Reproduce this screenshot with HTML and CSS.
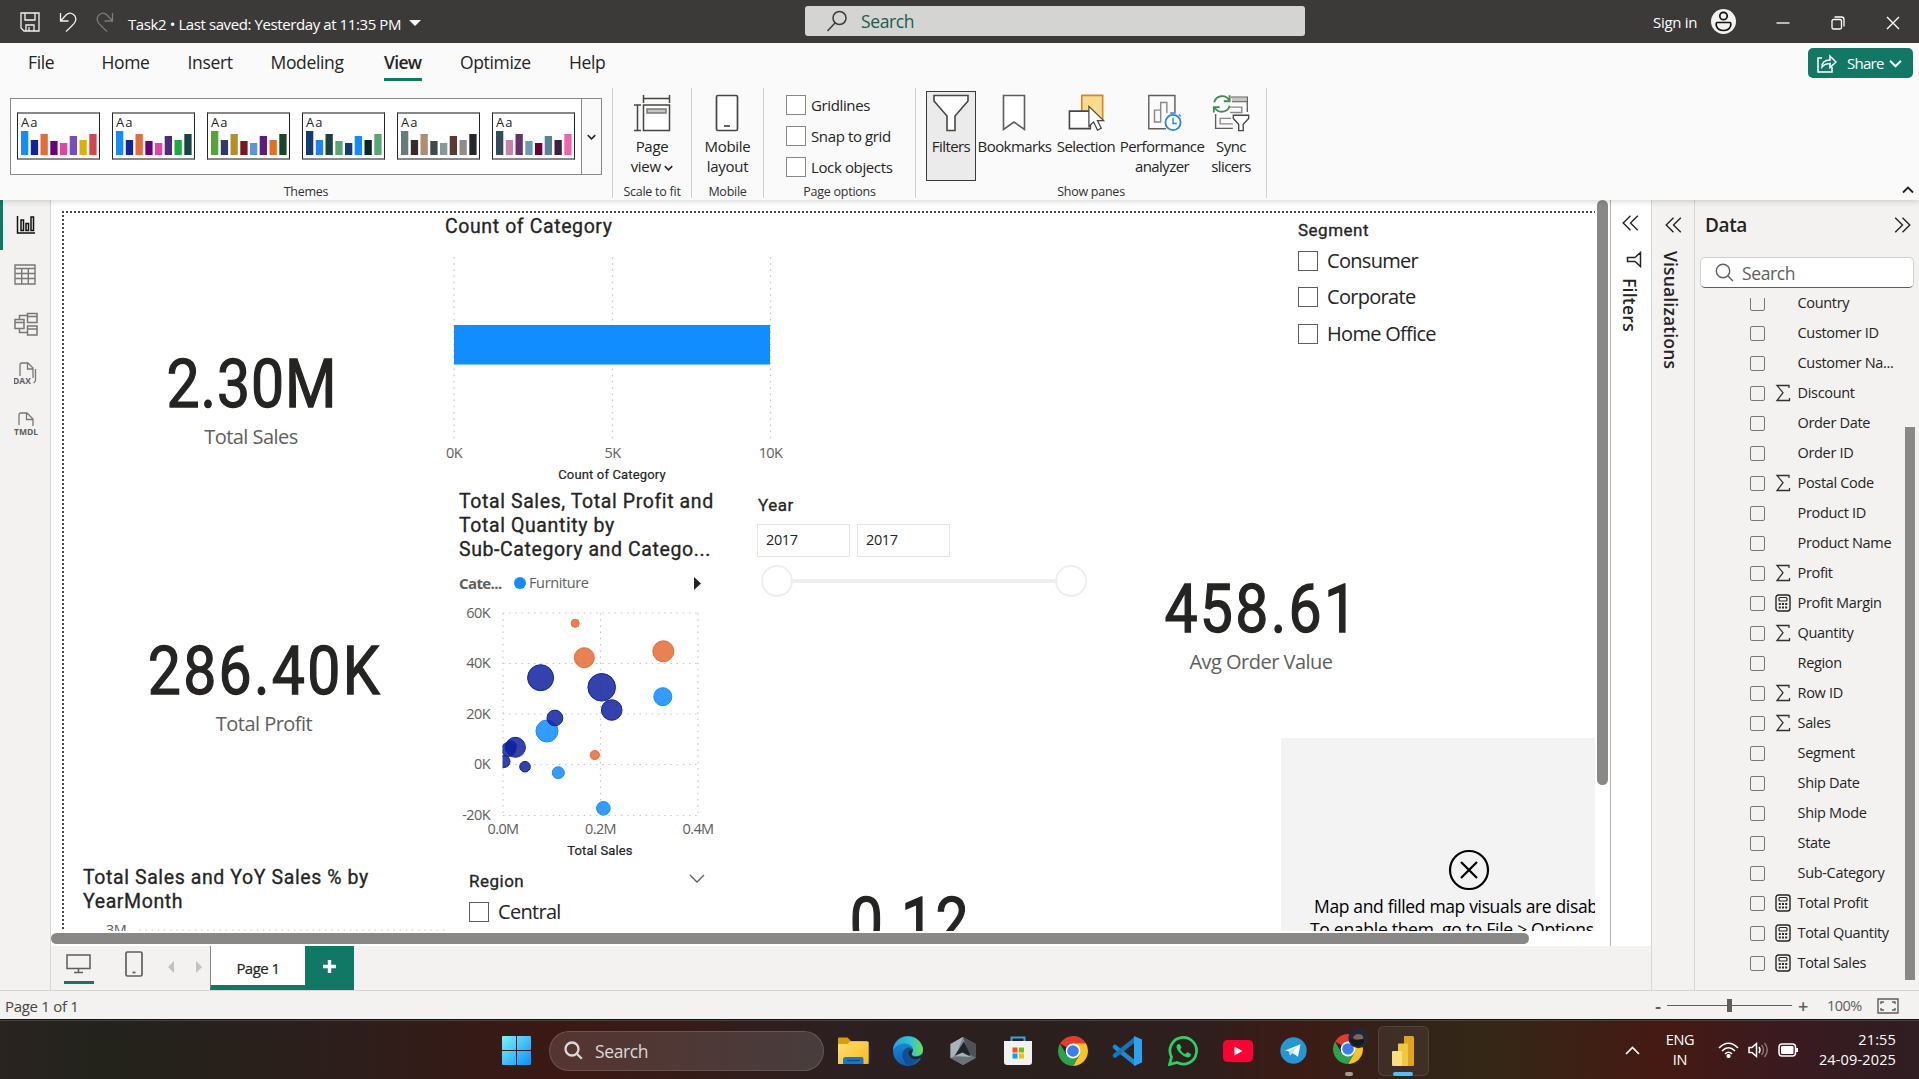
FILE: index.html
```html
<!DOCTYPE html>
<html lang="en">
<head>
<meta charset="utf-8">
<title>Task2 - Power BI Desktop</title>
<link rel="stylesheet" href="styles.css">
</head>
<body>
<svg class="defs" width="0" height="0">
  <defs>
    <symbol id="sigma" viewBox="0 0 16 18"><path d="M14 4V1.500H2l6 7.200L2 16.500h12.500V14" fill="none" stroke="#323130" stroke-width="1.300"/></symbol>
    <symbol id="calc" viewBox="0 0 16 18"><rect x="1" y="1" width="14" height="16" rx="2.500" fill="none" stroke="#252423" stroke-width="1.400"/><rect x="4" y="3.500" width="8" height="3.500" rx="1" fill="none" stroke="#252423" stroke-width="1.200"/><path d="M3.800 10h2m1.200 0h2m1.200 0h2M3.800 13.500h2m1.200 0h2m1.200 0h2" stroke="#252423" stroke-width="2"/></symbol>
    <symbol id="dbl-left" viewBox="0 0 17 16"><path d="M8.500 .7 1.200 8l7.300 7.300M15.800 .7 8.500 8l7.300 7.300" fill="none" stroke="#252423" stroke-width="1.400"/></symbol>
    <symbol id="chev" viewBox="0 0 12 8"><path d="M1 1.500 6 6.500l5-5" fill="none" stroke="currentColor" stroke-width="1.900"/></symbol>
    <symbol id="bars" viewBox="0 0 76 24" preserveAspectRatio="none">
      <rect x="0" y="0" width="7.300" height="24" fill="var(--a)"/><rect x="9.800" y="9" width="7.300" height="15" fill="var(--b)"/><rect x="19.500" y="3" width="7.300" height="21" fill="var(--c)"/><rect x="29.300" y="10" width="7.300" height="14" fill="var(--d)"/><rect x="39" y="12" width="7.300" height="12" fill="var(--e)"/><rect x="48.700" y="5" width="7.300" height="19" fill="var(--f)"/><rect x="58.500" y="9" width="7.300" height="15" fill="var(--g)"/><rect x="68.300" y="3" width="7.300" height="21" fill="var(--h)"/>
    </symbol>
    <symbol id="chrome" viewBox="0 0 30 30">
      <path d="M15 15 2.010 7.500A15 15 0 0 1 27.990 7.500z" fill="#e33b2e"/>
      <path d="M15 0A15 15 0 0 1 27.990 7.500H15z" fill="#e33b2e"/>
      <path d="M27.990 7.500A15 15 0 0 1 15 30l6.500-11.300L15 7.500z" fill="#fcc31e"/>
      <path d="M2.010 7.500A15 15 0 0 0 15 30l6.500-11.300L8.500 18.800z" fill="#2da14c"/>
      <circle cx="15" cy="15" r="7.400" fill="#fff"/><circle cx="15" cy="15" r="5.800" fill="#3b7ded"/>
    </symbol>
  </defs>
</svg>

<header class="titlebar">
  <div class="quick">
    <svg width="20" height="20" viewBox="0 0 20 20" fill="none" stroke="#f3f2f1" stroke-width="1.300"><path d="M1 1h18v18H4l-3-3zM5 1v7h10V1M6 19v-6h8v6M9 15v4"/></svg>
    <svg width="18" height="20" viewBox="0 0 18 20" fill="none" stroke="#f3f2f1" stroke-width="1.300"><path d="M1.500 1v8h8M1.500 9 7 3c5-4.500 12 1 9 7-1 2-3 4-9 9.500"/></svg>
    <svg width="18" height="20" viewBox="0 0 18 20" fill="none" stroke="#7d7b79" stroke-width="1.300"><path d="M16.500 1v8h-8M16.500 9 11 3C6-1.500-1 4 2 10c1 2 3 4 9 9.500"/></svg>
  </div>
  <div class="doc">Task2 • Last saved: Yesterday at 11:35 PM</div>
  <svg class="doc-caret" width="12" height="6" viewBox="0 0 12 6"><path d="M0 0h12L6 6z" fill="#fff"/></svg>
  <div class="top-search">
    <svg width="22" height="22" viewBox="0 0 22 22" fill="none" stroke="#3b3a39" stroke-width="1.500"><circle cx="13.500" cy="8" r="6.500"/><path d="m9 13-7.500 8"/></svg>
    <span>Search</span>
  </div>
  <div class="account">Sign in
    <svg width="25" height="25" viewBox="0 0 25 25"><circle cx="12.500" cy="12.500" r="12.500" fill="#f3f2f1"/><g fill="none" stroke="#111" stroke-width="1.700"><circle cx="12.500" cy="7" r="3.700"/><path d="M6 13.500h13c1.600 0 1.600 8-6.500 8s-8.100-8-6.500-8z"/></g></svg>
  </div>
  <div class="winbtns">
    <svg width="14" height="16" viewBox="0 0 14 16"><path d="M.5 8h13" stroke="#fff" stroke-width="1.300"/></svg>
    <svg width="14" height="14" viewBox="0 0 14 14" fill="none" stroke="#fff" stroke-width="1.300"><rect x="1" y="3.500" width="9.500" height="9.500" rx="1.500"/><path d="M3.500 1h7q2.500 0 2.500 2.500v7"/></svg>
    <svg width="14" height="14" viewBox="0 0 14 14"><path d="m1 1 12 12M13 1 1 13" stroke="#fff" stroke-width="1.400"/></svg>
  </div>
</header>

<section class="ribbon">
  <nav class="tabs">
    <span class="t-file">File</span><span class="t-home">Home</span><span class="t-insert">Insert</span><span class="t-model">Modeling</span><span class="t-view on">View</span><span class="t-opt">Optimize</span><span class="t-help">Help</span>
    <button class="share">
      <svg width="20" height="19" viewBox="0 0 20 19" fill="none" stroke="#fff" stroke-width="1.500"><path d="M5 4H1v14h14v-5M5 13c0-5 3-7 8-7V2l6 6-6 5.500V9.500c-4 0-6 1-8 3.500z"/></svg>
      Share
      <svg class="sm" width="13" height="9"><use href="#chev"/></svg>
    </button>
  </nav>
  <div class="groups">
    <div class="group g-themes">
      <div class="gallery">
        <div class="thumbs">
          <div class="thumb p1"><b>Aa</b><svg width="76" height="24"><use href="#bars"/></svg></div>
          <div class="thumb p2"><b>Aa</b><svg width="76" height="24"><use href="#bars"/></svg></div>
          <div class="thumb p3"><b>Aa</b><svg width="76" height="24"><use href="#bars"/></svg></div>
          <div class="thumb p4"><b>Aa</b><svg width="76" height="24"><use href="#bars"/></svg></div>
          <div class="thumb p5"><b>Aa</b><svg width="76" height="24"><use href="#bars"/></svg></div>
          <div class="thumb p6"><b>Aa</b><svg width="76" height="24"><use href="#bars"/></svg></div>
        </div>
        <div class="more"><svg width="9" height="6"><use href="#chev"/></svg></div>
      </div>
      <div class="cap">Themes</div>
    </div>
    <div class="group g-scale">
      <div class="cmd"><svg width="38" height="38" viewBox="0 0 38 38" fill="none" stroke="#484644" stroke-width="1.500"><path d="M10.500 1v8M36.500 1v8M10.500 4.500h26M1 11h7M1 36.500h7M4.500 11v25.500"/><path d="M10.500 11h26v25.500h-26z" fill="#fff"/><path d="M14 15h19v4H14z" fill="#c8c6c4" stroke="#797775"/></svg>
      <span>Page<br>view <svg width="9" height="6"><use href="#chev"/></svg></span></div>
      <div class="cap">Scale to fit</div>
    </div>
    <div class="group g-mobile">
      <div class="cmd"><svg width="24" height="38" viewBox="0 0 24 38" fill="none" stroke="#484644" stroke-width="1.700"><rect x="1.500" y="1.500" width="21" height="35" rx="1.500" fill="#fff"/><path d="M9 32h6"/></svg>
      <span>Mobile<br>layout</span></div>
      <div class="cap">Mobile</div>
    </div>
    <div class="group g-opts">
      <div class="checks"><label><i></i>Gridlines</label><label><i></i>Snap to grid</label><label><i></i>Lock objects</label></div>
      <div class="cap">Page options</div>
    </div>
    <div class="group g-panes">
      <div class="cmds">
        <div class="cmd pressed"><svg width="38" height="38" viewBox="0 0 38 38"><path d="M2 1.500h34V7L23 22v14.500h-8V22L2 7z" fill="#fff" stroke="#484644" stroke-width="1.600"/></svg><span>Filters</span></div>
        <div class="cmd c-book"><svg width="24" height="38" viewBox="0 0 24 38"><path d="M1.500 1.500h21v34L12 28 1.500 35.500z" fill="#fff" stroke="#605e5c" stroke-width="1.600"/></svg><span>Bookmarks</span></div>
        <div class="cmd c-sel"><svg width="40" height="40" viewBox="0 0 40 40"><path d="M14.500 1.500h22v25h-22z" fill="#f8dc8d" stroke="#d9822b" stroke-width="1.700"/><path d="M1.500 18h22v18.500h-22z" fill="#fff" stroke="#484644" stroke-width="1.700"/><path d="M22 13v21l5-4.500 4 8.500 4-2-4-8h6.500z" fill="#fff" stroke="#484644" stroke-width="1.300"/></svg><span>Selection</span></div>
        <div class="cmd c-perf"><svg width="38" height="40" viewBox="0 0 38 40" fill="none" stroke="#605e5c" stroke-width="1.500"><path d="M21 36.500H3v-35h27.500V19"/><path d="M9 29.500V17h6.500v12.500zM15.500 29.500V9H22v11" stroke="#8a8886"/><g stroke="#2b88d0" stroke-width="1.900"><circle cx="28.500" cy="30" r="8"/><path d="M28.500 25v6h4M25.500 20h6M34.500 21.500l2 2" stroke-width="1.500"/></g></svg><span>Performance<br>analyzer</span></div>
        <div class="cmd c-sync"><svg width="42" height="42" viewBox="0 0 42 42" fill="none" stroke="#605e5c" stroke-width="1.500"><path d="M21 3.500h18V20M22 8.500h17M4 22v16h19"/><path d="M22 4h16v4H22z" fill="#c8c6c4" stroke="none"/><path d="M20 14.500h13v6H20M23 33H9v-6h12" stroke="#8a8886"/><path d="M23.500 23.500h17V27l-6 6.500v7h-5v-7l-6-6.500z" fill="#fff" stroke="#484644"/><g stroke="#3d8f4e" stroke-width="2"><path d="M2.500 9A9 9 0 0 1 19 7M19.500 1.500V8h-6.500M19.500 13A9 9 0 0 1 3 15M2 20.500V14.500h6.500"/></g></svg><span>Sync<br>slicers</span></div>
      </div>
      <div class="cap">Show panes</div>
    </div>
    <svg class="collapse" width="12" height="8"><use href="#chev"/></svg>
  </div>
</section>

<main class="work">
  <aside class="rail">
    <div class="r-on"><svg width="20" height="20" viewBox="0 0 20 20" fill="none" stroke="#111" stroke-width="1.500"><path d="M1.500 1v17H19M5 5h2.500v10.500H5zM10 8.500h2.500v7H10zM15 2h2.500v13.500H15z"/></svg></div>
    <div><svg width="22" height="21" viewBox="0 0 22 21" fill="none" stroke="#797775" stroke-width="1.400"><path d="M1 1h20v19H1zM1 4.500h20M1 9.500h20M1 14.500h20M7.700 4.500V20M14.300 4.500V20"/></svg></div>
    <div><svg width="24" height="24" viewBox="0 0 24 24" fill="none" stroke="#797775" stroke-width="1.500"><path d="M13.500 1.500h9.500v9h-9.500zM13.500 4.500H23M13.500 14h9.500v9h-9.500zM13.500 17H23M1 7.500h9v9H1zM1 10.500h9M5.500 7.500v-4h8M5.500 16.500v4h8"/></svg></div>
    <div><svg width="24" height="24" viewBox="0 0 24 24" fill="none" stroke="#797775" stroke-width="1.300"><path d="M6 14V3q0-2 2-2h6l5 5v10M13.500 1v6H19M21.500 7v11q0 2-2 3"/><text class="rail-t" x="-1" y="22">DAX</text></svg></div>
    <div><svg width="24" height="24" viewBox="0 0 24 24" fill="none" stroke="#797775" stroke-width="1.300"><path d="M5 13V3q0-2 2-2h6l6 6v7M12.500 1v6.500H19"/><text class="rail-t" x="0" y="22.500">TMDL</text></svg></div>
  </aside>

  <div class="center">
    <div class="stage">
      <div class="canvas">
        <div class="page-edge"></div>

        <div class="card k-sales"><div class="num">2.30M</div><div class="lbl">Total Sales</div></div>
        <div class="card k-profit"><div class="num">286.40K</div><div class="lbl">Total Profit</div></div>
        <div class="card k-aov"><div class="num">458.61</div><div class="lbl">Avg Order Value</div></div>
        <div class="card k-disc"><div class="num">0.12</div></div>

        <div class="visual v-count">
          <h3>Count of Category</h3>
          <svg width="360" height="240" viewBox="430 240 360 240">
            <path class="grid" d="M454 257v183M612.500 257v183M770.500 257v183"/>
            <rect x="454" y="325" width="316" height="39.500" fill="#118dff"/>
            <g class="ax" text-anchor="middle"><text x="454" y="458">0K</text><text x="612.500" y="458">5K</text><text x="770.500" y="458">10K</text></g>
            <text class="axt" text-anchor="middle" x="612" y="478.500">Count of Category</text>
          </svg>
        </div>

        <div class="visual v-scatter">
          <h3>Total Sales, Total Profit and<br>Total Quantity by<br>Sub-Category and Catego...</h3>
          <div class="legend"><b>Cate...</b><i></i><span>Furniture</span><svg width="7" height="13" viewBox="0 0 7 13"><path d="M0 0v13l7-6.500z" fill="#252423"/></svg></div>
          <svg width="290" height="264" viewBox="440 600 290 264">
            <defs><clipPath id="plot"><rect x="502.500" y="605" width="200" height="215"/></clipPath></defs>
            <path class="grid" d="M503 613h195M503 663.500h195M503 714h195M503 764.500h195M503 815.500h195M503 613v202M600.500 613v202M698 613v202"/>
            <g clip-path="url(#plot)" class="dots">
              <g class="blue"><circle cx="547" cy="731" r="11"/><circle cx="662.800" cy="696.700" r="9"/><circle cx="558.300" cy="772.700" r="6"/><circle cx="603.400" cy="808.300" r="6.800"/></g>
              <g class="navy"><circle cx="540.600" cy="677.700" r="13"/><circle cx="601.700" cy="687.300" r="13.800"/><circle cx="611.700" cy="710" r="10.300"/><circle cx="554.900" cy="718" r="7.900"/><circle cx="515.400" cy="747.300" r="10"/><circle cx="508.500" cy="749.500" r="7"/><circle cx="511" cy="746.500" r="5.500"/><circle cx="504" cy="761.500" r="6"/><circle cx="525" cy="766.700" r="5.300"/></g>
              <g class="orange"><circle cx="575.200" cy="623.300" r="4"/><circle cx="584.300" cy="657.700" r="10"/><circle cx="663.300" cy="651.300" r="10.500"/><circle cx="594.800" cy="755" r="4.600"/></g>
            </g>
            <g class="ax" text-anchor="end"><text x="490" y="618">60K</text><text x="490" y="668">40K</text><text x="490" y="719">20K</text><text x="490" y="769">0K</text><text x="490" y="820">-20K</text></g>
            <g class="ax" text-anchor="middle"><text x="503" y="834">0.0M</text><text x="600.500" y="834">0.2M</text><text x="698" y="834">0.4M</text></g>
            <text class="axt" text-anchor="middle" x="600" y="854.500">Total Sales</text>
          </svg>
        </div>

        <div class="visual v-year">
          <h4>Year</h4>
          <div class="range"><span>2017</span><span>2017</span></div>
          <div class="slider"><i></i><hr><i></i></div>
        </div>

        <div class="visual v-segment">
          <h4>Segment</h4>
          <label><i></i>Consumer</label><label><i></i>Corporate</label><label><i></i>Home Office</label>
        </div>

        <div class="visual v-map">
          <svg width="42" height="42" viewBox="0 0 42 42" fill="none" stroke="#000" stroke-width="2.200"><circle cx="21" cy="21" r="19"/><path d="m13 13 16 16M29 13 13 29"/></svg>
          <p>Map and filled map visuals are disabled.</p>
          <p class="l2">To enable them, go to File &gt; Options and settings</p>
        </div>

        <div class="visual v-yoy">
          <h3>Total Sales and YoY Sales % by<br>YearMonth</h3>
          <svg width="380" height="24" viewBox="83 913 380 24"><text class="ax" x="106" y="934">3M</text><path class="grid" d="M139 929h308"/></svg>
        </div>

        <div class="visual v-region">
          <div class="head"><h4>Region</h4><svg width="16" height="9" viewBox="0 0 16 9"><path d="m1 1 7 7 7-7" fill="none" stroke="#605e5c" stroke-width="1.300"/></svg></div>
          <label><i></i>Central</label>
        </div>
      </div>
      <div class="vtrack"><i></i></div>
      <div class="htrack"><i></i></div>
    </div>
    <aside class="filters">
      <svg width="17" height="16"><use href="#dbl-left"/></svg>
      <svg class="fun" width="16" height="17" viewBox="0 0 16 17"><path d="M14.500 1.500v14L9 10.500H1.500v-4H9z" fill="none" stroke="#252423" stroke-width="1.500"/></svg>
      <b>Filters</b>
    </aside>
    <footer class="pagetabs">
      <div class="lay on"><svg width="25" height="20" viewBox="0 0 25 20" fill="none" stroke="#605e5c" stroke-width="1.500"><path d="M1 1h23v13.500H1zM12.500 14.500V18M8 18.500h9"/></svg></div>
      <div class="lay"><svg width="18" height="26" viewBox="0 0 18 26" fill="none" stroke="#605e5c" stroke-width="1.700"><rect x="1" y="1" width="16" height="24" rx="1.500"/><path d="M7.500 21.500h3"/></svg></div>
      <svg class="ar1" width="6" height="12" viewBox="0 0 6 12"><path d="M6 0v12L0 6z" fill="#c3c1bf"/></svg>
      <svg class="ar2" width="6" height="12" viewBox="0 0 6 12"><path d="M0 0v12l6-6z" fill="#c3c1bf"/></svg>
      <div class="ptab">Page 1</div>
      <div class="plus"><svg width="15" height="15" viewBox="0 0 15 15"><path d="M7.500 1v13M1 7.500h13" stroke="#fff" stroke-width="3.400"/></svg></div>
    </footer>
  </div>

  <aside class="vis">
    <svg width="17" height="16"><use href="#dbl-left"/></svg>
    <b>Visualizations</b>
  </aside>

  <aside class="data">
    <div class="dhead"><b>Data</b><svg class="flip" width="17" height="16"><use href="#dbl-left"/></svg></div>
    <div class="dsearch"><svg width="19" height="19" viewBox="0 0 19 19" fill="none" stroke="#605e5c" stroke-width="1.400"><circle cx="8" cy="8" r="6.700"/><path d="m12.800 12.800 5.200 5.200"/></svg>Search</div>
    <div class="dlist">
      <ul>
        <li><i></i><span></span>Country</li>
        <li><i></i><span></span>Customer ID</li>
        <li><i></i><span></span>Customer Na...</li>
        <li><i></i><span><svg><use href="#sigma"/></svg></span>Discount</li>
        <li><i></i><span></span>Order Date</li>
        <li><i></i><span></span>Order ID</li>
        <li><i></i><span><svg><use href="#sigma"/></svg></span>Postal Code</li>
        <li><i></i><span></span>Product ID</li>
        <li><i></i><span></span>Product Name</li>
        <li><i></i><span><svg><use href="#sigma"/></svg></span>Profit</li>
        <li><i></i><span><svg><use href="#calc"/></svg></span>Profit Margin</li>
        <li><i></i><span><svg><use href="#sigma"/></svg></span>Quantity</li>
        <li><i></i><span></span>Region</li>
        <li><i></i><span><svg><use href="#sigma"/></svg></span>Row ID</li>
        <li><i></i><span><svg><use href="#sigma"/></svg></span>Sales</li>
        <li><i></i><span></span>Segment</li>
        <li><i></i><span></span>Ship Date</li>
        <li><i></i><span></span>Ship Mode</li>
        <li><i></i><span></span>State</li>
        <li><i></i><span></span>Sub-Category</li>
        <li><i></i><span><svg><use href="#calc"/></svg></span>Total Profit</li>
        <li><i></i><span><svg><use href="#calc"/></svg></span>Total Quantity</li>
        <li><i></i><span><svg><use href="#calc"/></svg></span>Total Sales</li>
      </ul>
      <div class="dthumb"></div>
    </div>
  </aside>
</main>

<div class="status">
  <span class="pg">Page 1 of 1</span>
  <span class="minus">-</span>
  <div class="zoom"><i></i></div>
  <span class="zplus">+</span>
  <span class="pct">100%</span>
  <svg width="22" height="16" viewBox="0 0 22 16" fill="none" stroke="#605e5c" stroke-width="1.400"><path d="M1 1h20v14H1zM4 6V4h3M15 4h3v2M18 10v2h-3M7 12H4v-2"/></svg>
</div>

<footer class="taskbar">
  <div class="apps">
    <svg class="win" width="29" height="29" viewBox="0 0 29 29"><defs><linearGradient id="wg" gradientUnits="userSpaceOnUse" x1="0" y1="0" x2="29" y2="29"><stop offset="0" stop-color="#7bf3fd"/><stop offset="1" stop-color="#0a91f5"/></linearGradient></defs><path d="M0 1q0-1 1-1h13v14H0zM15 0h13q1 0 1 1v13H15zM0 15h14v14H1q-1 0-1-1zM15 15h14v13q0 1-1 1H15z" fill="url(#wg)"/></svg>
    <div class="tsearch"><svg width="19" height="19" viewBox="0 0 19 19" fill="none" stroke="#dcd8d8" stroke-width="2.300"><circle cx="8" cy="8" r="6.500"/><path d="m12.800 12.800 5 5"/></svg>Search</div>
    <div class="app"><svg width="32" height="28" viewBox="0 0 32 28"><defs><linearGradient id="fg" x2="1" y2="1"><stop stop-color="#ffe078"/><stop offset="1" stop-color="#fbb918"/></linearGradient></defs><path d="M1 1.500Q1 .5 2 .5h8.500L14 4h16v10H1z" fill="#dc9c05"/><path d="M1 7h9.500L13 4.500h18q.7 0 .7 1V26q0 1-1 1H1z" fill="url(#fg)"/><path d="M6 27v-4.500Q6 20 8.500 20H24q2.500 0 2.500 2.500V27z" fill="#0f78d0"/><path d="M10 23.500h13" stroke="#0a4f94" stroke-width="1.200"/></svg></div>
    <div class="app"><svg width="32" height="32" viewBox="0 0 32 32"><defs><linearGradient id="e1" x2="1"><stop offset=".1" stop-color="#2ba5e2"/><stop offset=".6" stop-color="#31c7cd"/><stop offset="1" stop-color="#6fdf45"/></linearGradient><linearGradient id="e2" x2="0" y2="1"><stop stop-color="#1d93dc"/><stop offset="1" stop-color="#0c5fb4"/></linearGradient></defs><circle cx="16" cy="16" r="15" fill="url(#e2)"/><path d="M1 15C2-1 26-4 31 13c1 7-7 10-11 7-1-1 1-2 1-5C21 8 8 5 1 15z" fill="url(#e1)"/><path d="M11 17c2-5 8-6 9.500-2-.5 3-2 4-.5 5.500 2 2 6 1.500 8 1-4 8-11 9-13 8-3-3-6-8-4-12.500z" fill="#134d92"/><path d="M20.500 14c1 3-2 4.500-.7 6.500 2.500 2.500 8 1.500 11.700-2.500l-2 5.500c-2-1-3 1.500-9 0-3-2-4-5-4-7z" fill="#2b211f"/></svg></div>
    <div class="app"><svg width="28" height="30" viewBox="0 0 28 30"><path d="M14 1l12.500 7v14L14 29 1.500 22V8z" fill="#7f868c"/><path d="M14 1 1.500 8v14L7 19z" fill="#a9b3bb"/><path d="m14 1 12.500 7v14L20 18z" fill="#4c5258"/><path d="M1.500 22 14 29l12.500-7-6-3.500z" fill="#6a7177"/><path d="m15 5.500 6.500 14L5.500 20z" fill="#202428"/><path d="m5.500 20 8-3.500 8.500 4.500z" fill="#aab1b7"/></svg></div>
    <div class="app"><svg width="30" height="30" viewBox="0 0 30 30"><path d="M8.500 6V1.500h13V6" fill="none" stroke="#31a6e4" stroke-width="2"/><path d="M1 5h28v21q0 3-3 3H4q-3 0-3-3z" fill="#f1f1f1"/><path d="M9.500 11.500h5v5h-5z" fill="#f25022"/><path d="M16 11.500h5v5h-5z" fill="#7fba00"/><path d="M9.500 17.500h5v5h-5z" fill="#00a4ef"/><path d="M16 17.500h5v5h-5z" fill="#ffb900"/></svg></div>
    <div class="app"><svg width="30" height="30"><use href="#chrome"/></svg></div>
    <div class="app"><svg width="32" height="32" viewBox="0 0 32 32"><path d="m3 12 20 16" stroke="#1c8bd6" stroke-width="4.500" stroke-linecap="round"/><path d="m3 20.500 20-16" stroke="#1276bd" stroke-width="4.500" stroke-linecap="round"/><path d="m22 1 8 3.500v23L22 31z" fill="#2ba3ef"/></svg></div>
    <div class="app"><svg width="30" height="30" viewBox="0 0 30 30"><path d="M1.500 28.500 3.500 21A13.300 13.300 0 1 1 9 26.500z" fill="none" stroke="#25d366" stroke-width="2.700"/><path d="M10.500 8c-3 1-2.500 5 1.500 9s8.500 6 10.500 3c.8-1.800.5-2.300-3-3.700-1-.3-1.500 2-2.500 1.700-2-.7-4-2.700-4.700-4.500-.2-.8 1.500-1.300 1-2.500C12 8 11.700 7.700 10.500 8z" fill="#25d366"/></svg></div>
    <div class="app"><svg width="30" height="22" viewBox="0 0 30 22"><rect width="30" height="22" rx="4.500" fill="#ff0033"/><path d="m11.500 6.500 8 4.500-8 4.500z" fill="#fff"/></svg></div>
    <div class="app"><svg width="27" height="27" viewBox="0 0 27 27"><circle cx="13.500" cy="13.500" r="13.200" fill="#2197d3"/><path d="m5 13.500 15.500-6.300-2.500 12.500-5.500-3.700L10 18.500l-.7-4z" fill="#fff"/><path d="m9.300 14.500 8-5-5 6.500-2.300 2.500z" fill="#bcdcef"/></svg></div>
    <div class="app run"><svg width="36" height="38" viewBox="0 0 36 38"><use href="#chrome" x="0" y="6" width="30" height="30"/><circle cx="25.500" cy="10" r="10.200" fill="#232831"/><path d="M20 9q3-4 8-2.500 3 1.500 2 4.500l-5 .8q-5 0-5-2.800z" fill="#7d6560"/><path d="M17 11q5 2 14 0 0 7-7 7-6-1-7-7z" fill="#15191f"/></svg></div>
    <div class="app act"><svg width="26" height="30" viewBox="0 0 26 30"><path d="M14 0h8.500q1.500 0 1.500 1.500V29q0 1-1 1H14z" fill="#dfa012"/><path d="M8 8.500Q8 7.500 9 7.500h8q1 0 1 1V30H8z" fill="#efc537"/><path d="M2 16q0-1 1-1h8q1 0 1 1v14H3q-1 0-1-1z" fill="#f8df76"/></svg></div>
  </div>
  <div class="tray">
    <svg class="up" width="15" height="9" viewBox="0 0 15 9"><path d="m1 8 6.500-6.500L14 8" fill="none" stroke="#fff" stroke-width="1.700"/></svg>
    <div class="lang">ENG<br>IN</div>
    <svg class="wifi" width="21" height="16" viewBox="0 0 21 16" fill="none" stroke="#fff" stroke-width="1.600"><path d="M1 6Q10.500-3.500 20 6M4 9q6.500-6.500 13 0M7 12q3.500-3.500 7 0"/><circle cx="10.500" cy="14" r="1.300" fill="#fff"/></svg>
    <svg width="21" height="16" viewBox="0 0 21 16" fill="none" stroke="#fff" stroke-width="1.500"><path d="M1 5.500h3L8.500 1.500v13L4 10.500H1z"/><path d="M11 5q2 3 0 6"/><path d="M13.500 3q4 5 0 10M16.500 1q5.500 7 0 14" stroke="#8b7270"/></svg>
    <svg width="21" height="14" viewBox="0 0 21 14"><rect x="1" y="1" width="16.500" height="12" rx="3" fill="none" stroke="#fff" stroke-width="1.500"/><rect x="3" y="3" width="12.500" height="8" rx="1.200" fill="#fff"/><path d="M19 5v4" stroke="#fff" stroke-width="2"/></svg>
    <div class="clock">21:55<br>24-09-2025</div>
  </div>
</footer>
</body>
</html>
```

FILE: styles.css
```css
* { box-sizing: border-box; }
body {
  margin: 0; width: 1919px; height: 1079px; overflow: hidden;
  display: flex; flex-direction: column;
  font: 15px/20px "Open Sans", "Noto Sans", sans-serif; letter-spacing: -0.025em;
  color: #252423; background: #f3f2f1;
}
svg { display: block; flex: none; }
.defs { position: absolute; }
i { font-style: normal; }

/* title bar */
.titlebar { height: 43px; flex: none; display: flex; align-items: center; background: #3b3a39; color: #fff; }
.quick { display: flex; gap: 19px; padding-left: 20px; width: 128px; }
.doc { width: 281px; padding-top: 5px; white-space: nowrap; letter-spacing: -0.027em; }
.doc-caret { margin-top: 3px; }
.top-search {
  width: 500px; height: 30px; margin: 0 0 1px 384px; padding-left: 21px; border-radius: 3px;
  display: flex; align-items: center; gap: 13px; background: #d4d4d2; color: #1c5c50; font-size: 17.500px;
}
.account { display: flex; align-items: center; gap: 14px; margin-left: 348px; white-space: nowrap; letter-spacing: -0.020em; }
.winbtns { display: flex; gap: 41px; margin-left: auto; padding: 2px 19px 0 0; align-items: center; }

/* ribbon */
.ribbon { height: 157px; flex: none; background: #fafafa; box-shadow: 0 2px 5px rgba(0,0,0,.14); position: relative; z-index: 2; }
.tabs { height: 40px; display: flex; padding-left: 28px; font-size: 17.500px; line-height: 39px; letter-spacing: -0.020em; }
.t-file { width: 73.500px; } .t-home { width: 86px; } .t-insert { width: 83px; } .t-model { width: 113.500px; }
.t-view { width: 38px; margin-right: 38px; } .t-opt { width: 109px; }
.tabs .on { font-weight: 600; letter-spacing: -0.040em; border-bottom: 3px solid #117865; height: 38px; }
.share {
  display: flex; align-items: center; width: 105px; height: 30px; margin: 5px 6px 0 auto; padding: 0 0 0 9px; gap: 10px;
  border: 0; border-radius: 5px; background: #117865; color: #fff; font: 400 15px "Open Sans", sans-serif; letter-spacing: -0.050em;
}
.share .sm { margin-left: -5px; }
.groups { display: flex; height: 112px; margin-top: 5px; padding-bottom: 2px; }
.group { display: flex; flex-direction: column; justify-content: space-between; border-right: 1px solid #d2d0ce; }
.cap { text-align: center; font-size: 12.500px; line-height: 16px; color: #323130; letter-spacing: -0.020em; margin-bottom: -2px; }
.g-themes { width: 613px; }
.g-scale { width: 79px; } .g-mobile { width: 72px; } .g-opts { width: 152px; } .g-panes { width: 351px; }
.gallery { display: flex; width: 592px; height: 77px; margin: 10px 0 0 10px; border: 1px solid #8a8886; background: #fff; }
.thumbs { display: flex; gap: 12px; padding: 13px 0 0 6px; width: 570px; }
.thumb { width: 83px; height: 48px; padding: 0 3px; border: 1px solid #252423; border-top: 2px solid #8a8886; border-bottom: 2px solid #8a8886; }
.thumb b { display: block; font: 500 13px/16px "Open Sans", sans-serif; letter-spacing: 1px; height: 17px; }
.more { flex: 1; display: grid; place-items: center; border-left: 1px solid #8a8886; background: #fafafa; }
.p1 { --a:#118dff; --b:#12239e; --c:#e66c37; --d:#6b007b; --e:#e044a7; --f:#744ec2; --g:#d9b300; --h:#d64550; }
.p2 { --a:#118dff; --b:#12239e; --c:#e66c37; --d:#6b007b; --e:#e044a7; --f:#4a2d75; --g:#1aab40; --h:#15463f; }
.p3 { --a:#58a336; --b:#2e3a6c; --c:#b19122; --d:#7a1524; --e:#5a96d6; --f:#5f1a80; --g:#e66f1f; --h:#17472a; }
.p4 { --a:#143c70; --b:#1b83ff; --c:#1b423d; --d:#5aa574; --e:#143c70; --f:#118dff; --g:#0b2820; --h:#5aa574; }
.p5 { --a:#687a7c; --b:#382a2b; --c:#b08c74; --d:#404a4c; --e:#869a9c; --f:#5c3932; --g:#928c88; --h:#22272a; }
.p6 { --a:#354a5a; --b:#c683ac; --c:#663366; --d:#6e99b6; --e:#6b0032; --f:#5b8099; --g:#3f1f45; --h:#ee65ae; }
.cmd { display: flex; flex-direction: column; align-items: center; padding-top: 6px; text-align: center; line-height: 20px; white-space: nowrap; letter-spacing: -0.020em; }
.cmd span { margin-top: 5px; }
.cmd > svg { height: 38px; margin-bottom: -1px; }
.cmd span svg { display: inline-block; vertical-align: 1px; }
.g-mobile .cmd > svg { margin-left: -2px; }
.checks { display: flex; flex-direction: column; gap: 11px; padding: 7px 0 0 22px; }
.checks label { display: flex; gap: 5px; height: 20px; align-items: center; white-space: nowrap; letter-spacing: -0.025em; }
.checks i { width: 20px; height: 20px; border: 1px solid #8a8886; background: #fff; }
.cmds { display: flex; padding: 3px 0 0 10px; height: 93px; }
.cmds .cmd { padding-top: 3px; width: 74px; letter-spacing: -0.038em; }
.cmds .pressed { width: 50px; height: 90px; background: #ebebeb; border: 1px solid #3b3a39; padding-top: 2px; }
.cmds .c-book { width: 77px; } .cmds .c-sel { width: 66px; } .cmds .c-perf { width: 86px; } .cmds .c-sync { width: 52px; }
.c-book > svg { margin-left: -1px; } .c-sel > svg { margin-left: 2px; } .c-perf > svg { margin-left: 4px; }
.collapse { margin: auto 5px 4px auto; transform: rotate(180deg); }

/* work area */
.work { flex: none; height: 790px; display: flex; }
.rail { width: 51px; border-right: 1px solid #d8d6d4; display: flex; flex-direction: column; }
.rail div { height: 50px; padding: 0 0 2px 14px; display: flex; align-items: center; }
.rail .r-on { border-left: 3px solid #117865; padding: 0 0 0 13px; }
.rail-t { font: 700 8.500px "Open Sans", sans-serif; fill: #605e5c; stroke: none; letter-spacing: 0; }
.center { width: 1600px; display: grid; grid-template: 746px 44px / 1559px 41px; }
.stage { display: grid; grid-template: 731px 15px / 1544px 15px; background: #fff; }
.canvas { position: relative; overflow: hidden; background: #fff; }
.vtrack { padding-left: 2px; }
.vtrack i { display: block; width: 11px; height: 585px; border-radius: 6px; background: #8a8886; }
.htrack { padding-top: 2px; grid-column: 1 / 3; }
.htrack i { display: block; width: 1478px; height: 11px; border-radius: 6px; background: #8a8886; }
.page-edge {
  position: absolute; left: 11px; top: 11px; right: 0; bottom: 0;
  background:
    repeating-linear-gradient(90deg, #484644 0 2px, transparent 2px 4px) 0 0 / 100% 2px no-repeat,
    repeating-linear-gradient(180deg, #484644 0 2px, transparent 2px 4px) 0 0 / 2px 100% no-repeat;
}

/* visuals sit freely on the report page */
.card, .visual { position: absolute; }
.card { width: 300px; text-align: center; }
.num { font: 400 67px/67px Roboto, sans-serif; transform: scaleX(.88); letter-spacing: 2.600px; text-indent: 2px; white-space: nowrap; -webkit-text-stroke: 1.300px #252423; }
.lbl { font-size: 20px; line-height: 26px; margin-top: 6px; color: #605e5c; letter-spacing: -0.026em; }
.k-sales { left: 50px; top: 151px; } .k-profit { left: 63px; top: 438px; }
.k-aov { left: 1060px; top: 376px; } .k-disc { left: 708px; top: 689px; }
.k-sales .num { letter-spacing: 1px; } .k-disc .num { letter-spacing: 1.500px; }
h3, h4 { margin: 0; font-family: Roboto, sans-serif; font-weight: 400; -webkit-text-stroke: .3px #252423; white-space: nowrap; }
h3 { font-size: 19.500px; line-height: 24px; letter-spacing: .600px; }
h4 { font-size: 17px; line-height: 22px; letter-spacing: .500px; }
.visual svg { overflow: visible; }
.grid { fill: none; stroke: #c8c6c4; stroke-width: 1.200; stroke-dasharray: 1.500 4.700; }
.ax { font: 14.500px "Open Sans", sans-serif; fill: #605e5c; letter-spacing: -0.040em; }
.axt { font: 400 13px Roboto, sans-serif; fill: #252423; stroke: #252423; stroke-width: .2px; letter-spacing: .150px; }
.v-count { left: 379px; top: 15px; } .v-count h3 { padding-left: 15px; margin-bottom: 1px; }
.v-scatter { left: 389px; top: 290px; }
.v-scatter h3 { padding-left: 19px; }
.legend { display: flex; align-items: center; height: 20px; margin: 11px 0 7px; padding-left: 19px; color: #605e5c; }
.legend b { width: 55px; letter-spacing: -0.040em; }
.legend i { width: 12px; height: 12px; margin-right: 4px; border-radius: 50%; background: #118dff; }
.legend span { width: 164.500px; font-size: 14.500px; margin-left: -1px; }
.dots circle { fill-opacity: .86; stroke-width: 1; }
.blue { fill: #118dff; stroke: #118dff; } .navy { fill: #12239e; stroke: #12239e; } .orange { fill: #e66c37; stroke: #e66c37; }
.v-year { left: 706px; top: 294px; }
.v-year h4 { padding-left: 1px; }
.range { display: flex; gap: 7px; margin-top: 8px; }
.range span { width: 93px; height: 33px; padding: 5px 8px; border: 1px solid #e6e4e2; font-size: 14.500px; }
.slider { display: flex; align-items: center; width: 326px; margin: 8px 0 0 4px; }
.slider i { width: 32px; height: 32px; border: 2px solid #eee; border-radius: 50%; }
.slider hr { flex: 1; margin: 0; border: 0; height: 4px; background: #eee; }
.v-segment { left: 1246px; top: 19px; }
.v-segment h4 { margin-bottom: -1px; padding-left: 1px; }
.visual label { display: flex; align-items: center; gap: 9px; height: 20px; font-size: 20px; line-height: 20px; white-space: nowrap; letter-spacing: -0.035em; }
.visual label i { width: 20px; height: 20px; border: 1px solid #605e5c; flex: none; }
.v-segment label { margin: 10px 0 16.500px 1px; padding-top: 1px; }
.v-map { left: 1230px; top: 538px; width: 374px; height: 300px; padding-top: 111px; background: #f3f3f3; color: #000; font-size: 17.500px; text-align: center; }
.v-map svg { margin: 0 auto; position: relative; left: 1px; }
.v-map p { margin: 4px 0 0 33px; line-height: 23px; text-align: left; white-space: nowrap; letter-spacing: -0.020em; }
.v-map .l2 { margin: 0 0 0 29px; letter-spacing: -0.016em; }
.v-yoy { left: 32px; top: 666px; }
.v-region { left: 417px; top: 670px; }
.v-region .head { display: flex; width: 237px; justify-content: space-between; padding-left: 1px; }
.v-region .head svg { margin-top: 4px; }
.v-region label { margin: 9px 0 0 1px; padding-top: 1px; }

.filters { border-left: 1px solid #b3b0ad; background: #fff; display: flex; flex-direction: column; align-items: flex-start; padding: 15px 0 0 11px; }
.filters .fun { margin: 20px 0 0 4px; }
.filters b, .vis b { writing-mode: vertical-rl; font-size: 17.500px; font-weight: 600; line-height: 22px; }
.filters b { margin: 10px 0 0 -3px; letter-spacing: .250px; }
.vis { width: 44px; border-left: 1px solid #d8d6d4; border-right: 1px solid #d8d6d4; padding: 17px 0 0 13px; }
.vis b { margin: 18px 0 0 -5px; letter-spacing: .150px; }

.pagetabs { grid-column: 1 / 3; display: flex; background: #f3f2f1; }
.lay { height: 38px; width: 30px; margin-left: 13px; display: flex; justify-content: center; align-items: center; }
.lay.on { border-bottom: 3px solid #117865; padding: 0 2px 0 0; }
.lay + .lay { margin-left: 25px; height: 36px; }
.ar1 { margin: 15px 22px 0 19px; } .ar2 { margin: 15px 8px 0 0; }
.ptab { width: 95px; border-left: 1px solid #8a8886; border-bottom: 5px solid #117865; background: #fff; text-align: center; line-height: 45px; height: 44px; letter-spacing: -0.035em; -webkit-text-stroke: .2px #252423; }
.plus { width: 49px; display: grid; place-items: center; background: #117865; padding-bottom: 3px; }

/* data pane */
.data { flex: 1; display: flex; flex-direction: column; }
.dhead { display: flex; justify-content: space-between; padding: 17px 8px 0 10px; font-size: 19px; line-height: 17px; }
.dhead b { font-weight: 600; }
.flip { transform: scaleX(-1); }
.dsearch { display: flex; align-items: center; gap: 8px; width: 214px; height: 31px; margin: 23px 0 10px 5px; padding-left: 14px; border: 1px solid #d2d0ce; border-bottom: 1px solid #605e5c; border-radius: 5px; background: #fff; color: #605e5c; font-size: 17.500px; }
.dlist { display: flex; height: 682px; overflow: hidden; }
.dlist ul { width: 210px; margin: -10px 0 0; padding: 0; list-style: none; }
.dlist li { height: 30px; display: flex; align-items: center; padding-left: 55px; white-space: nowrap; letter-spacing: -0.022em; font-size: 14.500px; }
.dlist li i { width: 15px; height: 15px; border: 1px solid #797775; border-radius: 2px; }
.dlist li span { width: 32.500px; padding-left: 10px; }
.dlist li svg { width: 16px; height: 18px; }
.dthumb { width: 10px; height: 553px; margin-top: 129px; background: #8a8886; }

/* status bar */
.status { height: 30px; flex: none; border-top: 1px solid #d8d6d4; border-bottom: 1px solid #111; display: flex; align-items: center; color: #605e5c; padding: 1px 20px 0 5px; }
.pg { flex: 1; color: #484644; padding-top: 1px; letter-spacing: -0.020em; }
.status .minus { width: 12px; font-size: 19px; font-weight: 600; }
.zoom { width: 125px; height: 1px; background: #605e5c; }
.zoom i { display: block; width: 5px; height: 13px; margin: -6px 0 0 60px; background: #605e5c; position: relative; top: -6px; margin-top: 0; }
.zplus { width: 35px; padding-left: 6px; font-size: 18px; font-weight: 600; }
.pct { width: 50px; font-size: 14.500px; letter-spacing: -0.040em; }

/* taskbar */
.taskbar {
  height: 59px; flex: none; display: flex; color: #fff; border-top: 1px solid #4a4542;
  background: linear-gradient(90deg, #2a2320 0, #23231c 100px, #2f1e1b 370px, #3c1813 560px, #2c2020 840px, #2a201e 1000px, #2e1f1d 1200px, #3d1b14 1300px, #33221a 1400px, #332715 1480px, #451a12 1660px, #3a1a20 1790px, #2f1e22 1919px);
}
.apps { display: flex; align-items: center; padding-left: 502px; height: 59px; }
.tsearch { width: 275px; height: 40px; margin: 0 1px 0 18px; padding-left: 14px; display: flex; align-items: center; gap: 12px; border: 1px solid rgba(255,255,255,.14); border-radius: 20px; background: rgba(255,255,255,.13); font-size: 17.500px; color: #dcd8d8; }
.app { width: 55.100px; height: 50px; display: grid; place-items: center; position: relative; }
.run svg { margin: -8px 0 0 6px; }
.run::after, .act::after { content: ""; position: absolute; bottom: 0; left: 24px; width: 8px; height: 4px; border-radius: 2px; background: #a19a98; }
.act::before { content: ""; position: absolute; inset: 0 2.500px; border: 1px solid rgba(255,255,255,.1); border-radius: 6px; background: rgba(255,255,255,.06); }
.act::after { left: 17px; width: 20px; background: #4cc2ff; }
.tray { display: flex; align-items: center; margin-left: auto; padding-right: 23px; height: 58px; font-size: 14.500px; }
.lang { width: 32px; text-align: center; margin: 0 22px 0 24px; letter-spacing: -0.020em; }
.tray svg + svg { margin-left: 9px; }
.clock { width: 97px; text-align: right; letter-spacing: .010em; }
```
